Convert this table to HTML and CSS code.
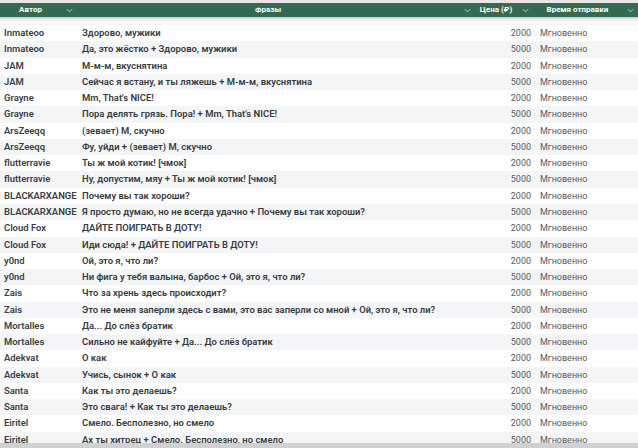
FILE: index.html
```html
<!DOCTYPE html>
<html lang="ru">
<head>
<meta charset="utf-8">
<link rel="stylesheet" href="styles.css">
</head>
<body>
<div class="grid-view">
  <div class="top-line"></div>
  <div class="header">
    <div class="hcell"><span class="htext">Автор</span><span class="chev"><svg viewBox="0 0 8 5" width="7" height="5"><path d="M1 1 L4 4 L7 1" fill="none" stroke="currentColor" stroke-width="1.1"/></svg></span></div>
    <div class="hcell"><span class="htext">Фразы</span><span class="chev"><svg viewBox="0 0 8 5" width="7" height="5"><path d="M1 1 L4 4 L7 1" fill="none" stroke="currentColor" stroke-width="1.1"/></svg></span></div>
    <div class="hcell"><span class="htext">Цена (₽)</span><span class="chev"><svg viewBox="0 0 8 5" width="7" height="5"><path d="M1 1 L4 4 L7 1" fill="none" stroke="currentColor" stroke-width="1.1"/></svg></span></div>
    <div class="hcell"><span class="htext">Время отправки</span><span class="chev"><svg viewBox="0 0 8 5" width="7" height="5"><path d="M1 1 L4 4 L7 1" fill="none" stroke="currentColor" stroke-width="1.1"/></svg></span></div>
  </div>
  <div class="viewport">
    <div class="rows">
      <div class="row even"><div class="c author">Lagoda</div><div class="c phrase">Ну ладно, держу в курсе + Путь один, вперёд</div><div class="c price">5000</div><div class="c time">Мгновенно</div></div>
      <div class="row"><div class="c author">Inmateoo</div><div class="c phrase">Здорово, мужики</div><div class="c price">2000</div><div class="c time">Мгновенно</div></div>
      <div class="row even"><div class="c author">Inmateoo</div><div class="c phrase">Да, это жёстко + Здорово, мужики</div><div class="c price">5000</div><div class="c time">Мгновенно</div></div>
      <div class="row"><div class="c author">JAM</div><div class="c phrase">М-м-м, вкуснятина</div><div class="c price">2000</div><div class="c time">Мгновенно</div></div>
      <div class="row even"><div class="c author">JAM</div><div class="c phrase">Сейчас я встану, и ты ляжешь + М-м-м, вкуснятина</div><div class="c price">5000</div><div class="c time">Мгновенно</div></div>
      <div class="row"><div class="c author">Grayne</div><div class="c phrase">Mm, That's NICE!</div><div class="c price">2000</div><div class="c time">Мгновенно</div></div>
      <div class="row even"><div class="c author">Grayne</div><div class="c phrase">Пора делять грязь. Пора! + Mm, That's NICE!</div><div class="c price">5000</div><div class="c time">Мгновенно</div></div>
      <div class="row"><div class="c author">ArsZeeqq</div><div class="c phrase">(зевает) М, скучно</div><div class="c price">2000</div><div class="c time">Мгновенно</div></div>
      <div class="row even"><div class="c author">ArsZeeqq</div><div class="c phrase">Фу, уйди + (зевает) М, скучно</div><div class="c price">5000</div><div class="c time">Мгновенно</div></div>
      <div class="row"><div class="c author">flutterravie</div><div class="c phrase">Ты ж мой котик! [чмок]</div><div class="c price">2000</div><div class="c time">Мгновенно</div></div>
      <div class="row even"><div class="c author">flutterravie</div><div class="c phrase">Ну, допустим, мяу + Ты ж мой котик! [чмок]</div><div class="c price">5000</div><div class="c time">Мгновенно</div></div>
      <div class="row"><div class="c author">BLACKARXANGEL</div><div class="c phrase">Почему вы так хороши?</div><div class="c price">2000</div><div class="c time">Мгновенно</div></div>
      <div class="row even"><div class="c author">BLACKARXANGEL</div><div class="c phrase">Я просто думаю, но не всегда удачно + Почему вы так хороши?</div><div class="c price">5000</div><div class="c time">Мгновенно</div></div>
      <div class="row"><div class="c author">Cloud Fox</div><div class="c phrase">ДАЙТЕ ПОИГРАТЬ В ДОТУ!</div><div class="c price">2000</div><div class="c time">Мгновенно</div></div>
      <div class="row even"><div class="c author">Cloud Fox</div><div class="c phrase">Иди сюда! + ДАЙТЕ ПОИГРАТЬ В ДОТУ!</div><div class="c price">5000</div><div class="c time">Мгновенно</div></div>
      <div class="row"><div class="c author">y0nd</div><div class="c phrase">Ой, это я, что ли?</div><div class="c price">2000</div><div class="c time">Мгновенно</div></div>
      <div class="row even"><div class="c author">y0nd</div><div class="c phrase">Ни фига у тебя валына, барбос + Ой, это я, что ли?</div><div class="c price">5000</div><div class="c time">Мгновенно</div></div>
      <div class="row"><div class="c author">Zais</div><div class="c phrase">Что за хрень здесь происходит?</div><div class="c price">2000</div><div class="c time">Мгновенно</div></div>
      <div class="row even"><div class="c author">Zais</div><div class="c phrase">Это не меня заперли здесь с вами, это вас заперли со мной + Ой, это я, что ли?</div><div class="c price">5000</div><div class="c time">Мгновенно</div></div>
      <div class="row"><div class="c author">Mortalles</div><div class="c phrase">Да... До слёз братик</div><div class="c price">2000</div><div class="c time">Мгновенно</div></div>
      <div class="row even"><div class="c author">Mortalles</div><div class="c phrase">Сильно не кайфуйте + Да... До слёз братик</div><div class="c price">5000</div><div class="c time">Мгновенно</div></div>
      <div class="row"><div class="c author">Adekvat</div><div class="c phrase">О как</div><div class="c price">2000</div><div class="c time">Мгновенно</div></div>
      <div class="row even"><div class="c author">Adekvat</div><div class="c phrase">Учись, сынок + О как</div><div class="c price">5000</div><div class="c time">Мгновенно</div></div>
      <div class="row"><div class="c author">Santa</div><div class="c phrase">Как ты это делаешь?</div><div class="c price">2000</div><div class="c time">Мгновенно</div></div>
      <div class="row even"><div class="c author">Santa</div><div class="c phrase">Это свага! + Как ты это делаешь?</div><div class="c price">5000</div><div class="c time">Мгновенно</div></div>
      <div class="row"><div class="c author">Eiritel</div><div class="c phrase">Смело. Бесполезно, но смело</div><div class="c price">2000</div><div class="c time">Мгновенно</div></div>
      <div class="row even"><div class="c author">Eiritel</div><div class="c phrase">Ах ты хитрец + Смело. Бесполезно, но смело</div><div class="c price">5000</div><div class="c time">Мгновенно</div></div>
    </div>
  </div>
  <div class="hscroll"></div>
</div>
</body>
</html>
```

FILE: styles.css
```css
html, body {
  margin: 0;
  padding: 0;
  background: #ffffff;
}
body {
  font-family: Roboto, "Noto Sans", "DejaVu Sans", sans-serif;
  width: 638px;
  height: 448px;
  overflow: hidden;
}
.grid-view {
  display: flex;
  flex-direction: column;
  height: 448px;
}
.top-line {
  height: 3px;
  background: #e6e8e7;
  flex: none;
}
.header {
  flex: none;
  height: 14px;
  background: #336a51;
  display: grid;
  grid-template-columns: 77px 398px 58px 105px;
  position: relative;
  z-index: 1;
}
.header::after {
  content: "";
  position: absolute;
  left: 0;
  right: 0;
  top: 100%;
  height: 6px;
  background: linear-gradient(#c9cbcb, #eceded 45%, #ffffff);
}
.hcell {
  display: flex;
  align-items: center;
  color: #ffffff;
  font-size: 8px;
  font-weight: 700;
  line-height: 14px;
}
.htext {
  flex: 1;
  text-align: center;
  white-space: nowrap;
}
.chev {
  width: 16px;
  flex: none;
  display: flex;
  justify-content: center;
  align-items: center;
  color: #b9d2c5;
}
.viewport {
  flex: 1;
  overflow: hidden;
}
.rows {
  margin-top: -8.2px;
}
.row {
  display: grid;
  grid-template-columns: 77px 398px 58px 105px;
  height: 16.28px;
  line-height: 16.28px;
  font-size: 9px;
  background: #ffffff;
}
.row.even {
  background: #f4f5f7;
}
.c {
  white-space: nowrap;
  overflow: hidden;
}
.author {
  padding-left: 4px;
  font-size: 9.45px;
  font-weight: 600;
  color: #394046;
}
.phrase {
  padding-left: 5px;
  font-size: 9.45px;
  font-weight: 600;
  color: #363c42;
}
.price {
  text-align: right;
  padding-right: 2px;
  color: #555b60;
}
.time {
  padding-left: 7px;
  color: #555b60;
}
.hscroll {
  flex: none;
  height: 5px;
  background: #cfd1d2;
}
```
